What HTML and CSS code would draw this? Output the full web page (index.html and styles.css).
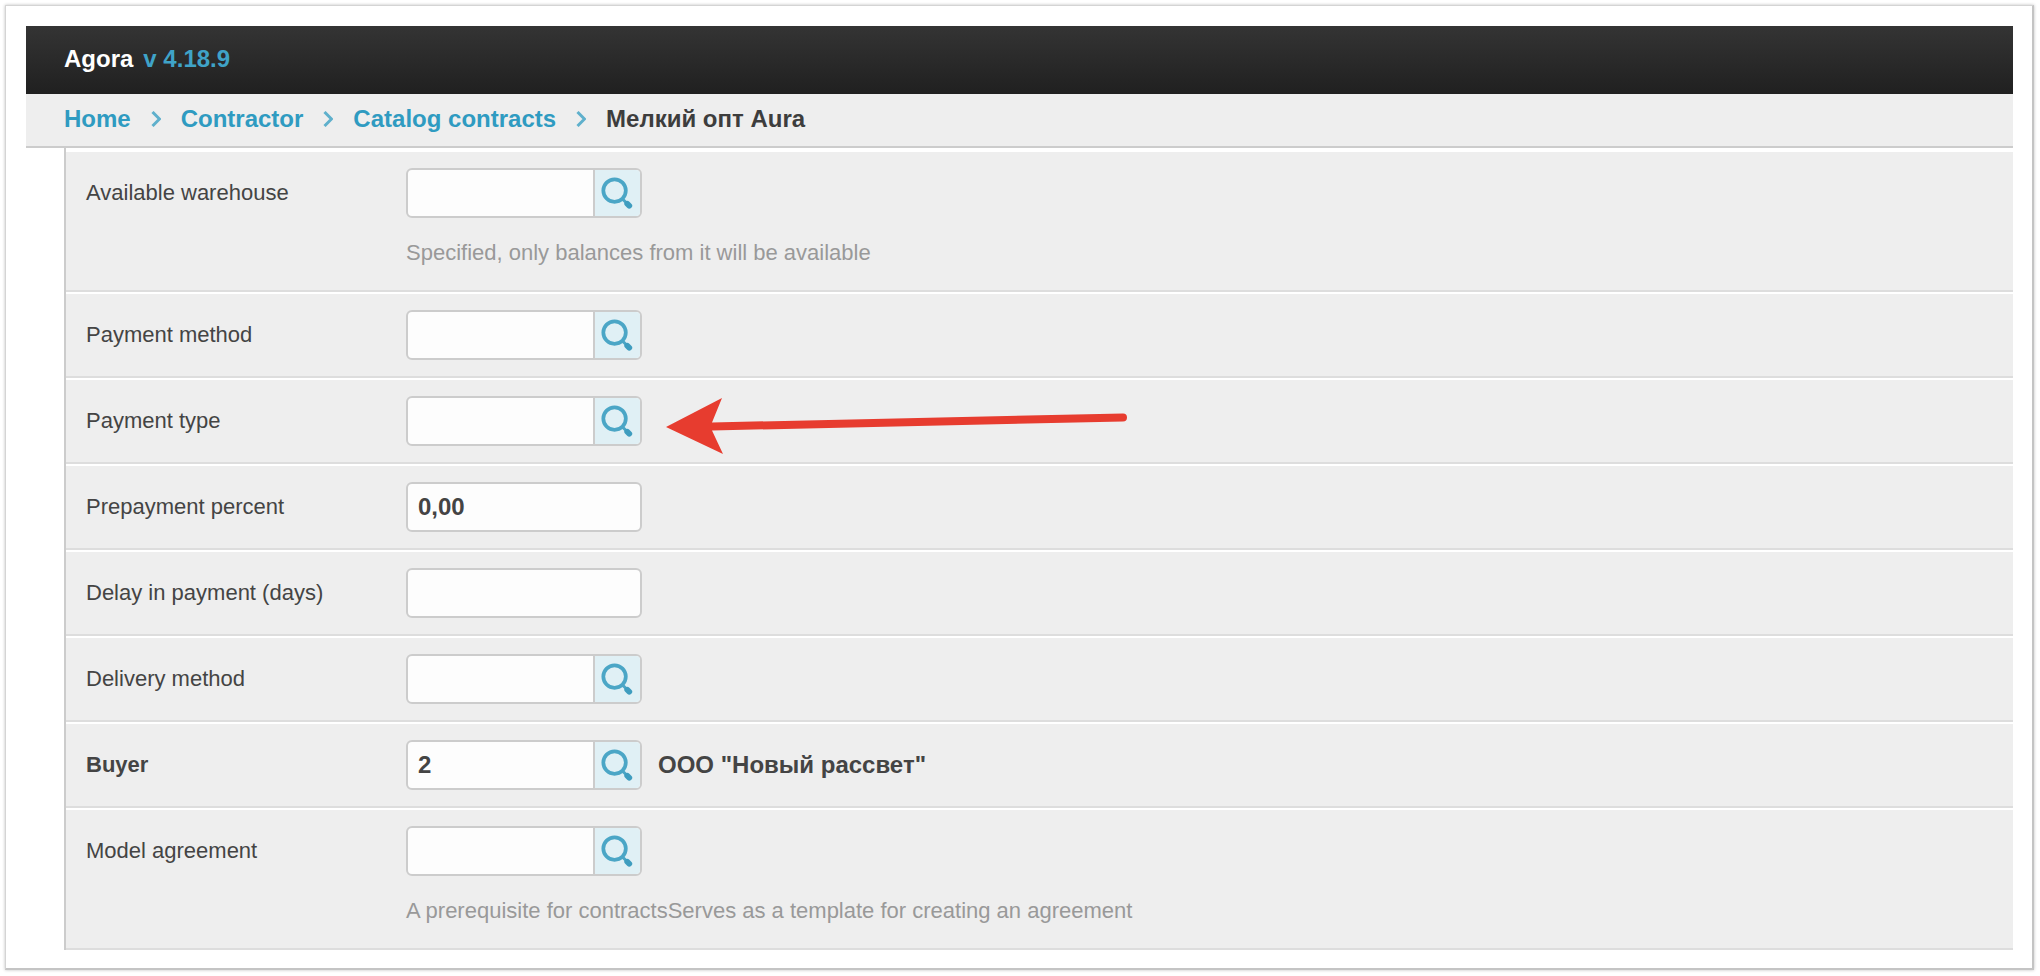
FILE: index.html
```html
<!DOCTYPE html>
<html lang="en">
<head>
    <meta charset="UTF-8">
    <title>Agora</title>
    <link rel="stylesheet" href="styles.css">
</head>
<body>
    <svg class="sprites" width="0" height="0">
        <symbol id="icon-search" viewBox="0 0 46 46">
            <circle cx="20" cy="20.5" r="11.5" fill="none" stroke="#4ba6c6" stroke-width="3.8"/>
            <path d="M28 29 L33 34" stroke="#4ba6c6" stroke-width="3" fill="none"/>
            <path d="M33 34 L35 36" stroke="#3f9dbf" stroke-width="6" stroke-linecap="round" fill="none"/>
        </symbol>
        <symbol id="icon-chevron" viewBox="0 0 10 16">
            <path d="M1.5 1 L8.5 8 L1.5 15" stroke="#5fb0cc" stroke-width="3" fill="none"/>
        </symbol>
    </svg>

    <div class="frame">
        <div class="topbar">
            <span class="brand">Agora</span>
            <span class="version">v 4.18.9</span>
        </div>

        <div class="breadcrumb">
            <a href="#">Home</a>
            <svg class="chevron"><use href="#icon-chevron"/></svg>
            <a href="#">Contractor</a>
            <svg class="chevron"><use href="#icon-chevron"/></svg>
            <a href="#">Catalog contracts</a>
            <svg class="chevron"><use href="#icon-chevron"/></svg>
            <span class="current">Мелкий опт Aura</span>
        </div>

        <div class="content">
            <div class="row row-hint">
                <label>Available warehouse</label>
                <div class="field">
                    <div class="lookup">
                        <input type="text">
                        <button type="button"><svg class="search"><use href="#icon-search"/></svg></button>
                    </div>
                    <p class="hint">Specified, only balances from it will be available</p>
                </div>
            </div>

            <div class="row">
                <label>Payment method</label>
                <div class="field">
                    <div class="lookup">
                        <input type="text">
                        <button type="button"><svg class="search"><use href="#icon-search"/></svg></button>
                    </div>
                </div>
            </div>

            <div class="row">
                <label>Payment type</label>
                <div class="field">
                    <div class="lookup">
                        <input type="text">
                        <button type="button"><svg class="search"><use href="#icon-search"/></svg></button>
                    </div>
                </div>
            </div>

            <div class="row">
                <label>Prepayment percent</label>
                <div class="field">
                    <input class="plain" type="text" value="0,00">
                </div>
            </div>

            <div class="row">
                <label>Delay in payment (days)</label>
                <div class="field">
                    <input class="plain" type="text">
                </div>
            </div>

            <div class="row">
                <label>Delivery method</label>
                <div class="field">
                    <div class="lookup">
                        <input type="text">
                        <button type="button"><svg class="search"><use href="#icon-search"/></svg></button>
                    </div>
                </div>
            </div>

            <div class="row">
                <label class="required">Buyer</label>
                <div class="field field-inline">
                    <div class="lookup">
                        <input type="text" value="2">
                        <button type="button"><svg class="search"><use href="#icon-search"/></svg></button>
                    </div>
                    <span class="resolved">ООО "Новый рассвет"</span>
                </div>
            </div>

            <div class="row row-hint row-last">
                <label>Model agreement</label>
                <div class="field">
                    <div class="lookup">
                        <input type="text">
                        <button type="button"><svg class="search"><use href="#icon-search"/></svg></button>
                    </div>
                    <p class="hint">A prerequisite for contractsServes as a template for creating an agreement</p>
                </div>
            </div>
        </div>

        <!-- annotation drawn over the form -->
        <svg class="arrow" width="470" height="64" viewBox="0 0 470 64">
            <path d="M1 31 L57 2 L47 26.5 L458 17.5 A4 4 0 0 1 458 25.5 L47 34.5 L58 58 Z" fill="#e73c2f"/>
        </svg>
    </div>
</body>
</html>
```

FILE: styles.css
```css
body {
    font-family: "Liberation Sans", Arial, sans-serif;
    font-size: 22px;
    color: #444;
    margin: 0;
    padding: 5px 6px 6px 5px;
    background: #fff;
}
.sprites {
    position: absolute;
}
.frame {
    position: relative;
    height: 965px;
    box-sizing: border-box;
    padding: 20px 19px 19px 20px;
    background: #fff;
    border: 1px solid #d4d4d4;
    border-right: 2px solid #c4c4c4;
    border-bottom: 2px solid #c4c4c4;
    box-shadow: 0 0 3px rgba(0, 0, 0, 0.25);
}
.topbar {
    height: 68px;
    display: flex;
    align-items: center;
    gap: 10px;
    padding-left: 38px;
    padding-bottom: 2px;
    box-sizing: border-box;
    background: linear-gradient(#343434, #202020);
    font-size: 24px;
    font-weight: bold;
}
.brand {
    color: #fff;
}
.version {
    color: #3fa3c8;
}
.breadcrumb {
    height: 54px;
    box-sizing: border-box;
    display: flex;
    align-items: center;
    gap: 20px;
    padding-left: 38px;
    padding-bottom: 2px;
    background: #eee;
    border-bottom: 2px solid #ccc;
    font-size: 24px;
    font-weight: bold;
}
.breadcrumb a {
    color: #2f9bc1;
    text-decoration: none;
}
.breadcrumb .current {
    color: #3d3d3d;
}
.chevron {
    width: 10px;
    height: 16px;
}
.content {
    margin-left: 38px;
    padding-top: 4px;
    border-left: 2px solid #ccc;
}
.row {
    display: flex;
    padding: 16px 0 16px 20px;
    margin-bottom: 2px;
    background: #eee;
    border-bottom: 2px solid #ddd;
}
.row-hint {
    padding-bottom: 24px;
}
.row-last {
    margin-bottom: 0;
}
.row label {
    width: 320px;
    line-height: 50px;
}
.row label.required {
    font-weight: bold;
}
.field-inline {
    display: flex;
    align-items: center;
    gap: 16px;
}
.lookup {
    display: flex;
    width: 236px;
    height: 50px;
    box-sizing: border-box;
    border: 2px solid #ccc;
    border-radius: 6px;
    overflow: hidden;
    background: #fdfdfd;
}
.lookup input {
    width: 185px;
    height: 100%;
    box-sizing: border-box;
    padding: 0 10px;
    border: 0;
    background: transparent;
    font: bold 24px "Liberation Sans", Arial, sans-serif;
    color: #444;
}
.lookup button {
    width: 47px;
    padding: 0;
    border: 0;
    border-left: 2px solid #ccc;
    background: #e0f0f5;
    cursor: pointer;
}
.search {
    display: block;
    width: 45px;
    height: 46px;
    filter: blur(0.5px);
}
.plain {
    display: block;
    width: 236px;
    height: 50px;
    box-sizing: border-box;
    padding: 0 10px;
    border: 2px solid #ccc;
    border-radius: 6px;
    background: #fdfdfd;
    font: bold 24px "Liberation Sans", Arial, sans-serif;
    color: #444;
}
.hint {
    margin: 22px 0 0;
    line-height: 26px;
    color: #999;
}
.resolved {
    font-size: 24px;
    font-weight: bold;
}
.arrow {
    position: absolute;
    left: 659px;
    top: 390px;
}
```
